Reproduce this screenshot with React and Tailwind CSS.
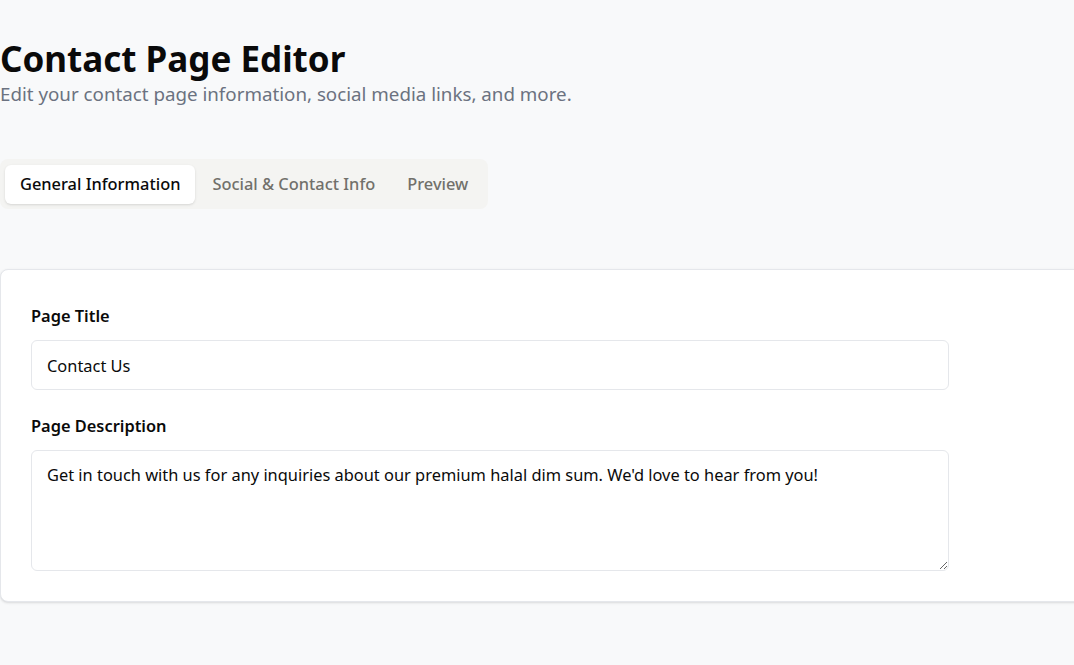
import { useState } from "react";

const FONT = { fontFamily: '"Segoe UI", "Noto Sans", "Open Sans", sans-serif' };

const TABS = ["General Information", "Social & Contact Info", "Preview"];

export default function App() {
  const [tab, setTab] = useState(0);
  const [title, setTitle] = useState("Contact Us");
  const [desc, setDesc] = useState(
    "Get in touch with us for any inquiries about our premium halal dim sum. We'd love to hear from you!"
  );

  return (
    <div className="min-h-[665px] w-full overflow-hidden bg-[#f8f9fa] text-[#0a0a0a]" style={FONT}>
      <div className="w-[1110px] pt-[38px]">
        <h1 className="text-[35px] font-bold leading-[42px]">Contact Page Editor</h1>
        <p className="text-[18.75px] leading-7 text-[#6b7280]">
          Edit your contact page information, social media links, and more.
        </p>

        {/* tabs */}
        <div className="mt-[51px] inline-flex h-[50px] items-center gap-[2px] rounded-lg bg-[#f4f4f2] p-[5px]">
          {TABS.map((t, i) => (
            <button
              key={t}
              onClick={() => setTab(i)}
              className={
                i === tab
                  ? "h-[39px] rounded-md bg-white px-[15px] text-[16.4px] font-medium text-[#0a0a0a] shadow-sm"
                  : "h-[39px] rounded-md px-[15px] text-[16.4px] font-medium text-[#71706b]"
              }
            >
              {t}
            </button>
          ))}
        </div>

        {/* card */}
        <div className="mt-[60px] rounded-lg border border-[#e5e7eb] bg-white px-[30px] pt-[34px] pb-[30px] shadow-sm">
          <div className="flex w-[918px] flex-col gap-6">
            <div className="flex flex-col gap-3">
              <label className="text-[16.4px] font-semibold leading-6">Page Title</label>
              <input
                value={title}
                onChange={(e) => setTitle(e.target.value)}
                className="h-[50px] rounded-md border border-[#e5e7eb] bg-white px-[15px] text-[16.4px] outline-none"
              />
            </div>
            <div className="flex flex-col gap-3">
              <label className="text-[16.4px] font-semibold leading-6">Page Description</label>
              <textarea
                rows={4}
                value={desc}
                onChange={(e) => setDesc(e.target.value)}
                className="h-[121px] rounded-md border border-[#e5e7eb] bg-white px-[15px] py-3 text-[16.4px] leading-6 outline-none"
              />
            </div>
          </div>
        </div>
      </div>
    </div>
  );
}
